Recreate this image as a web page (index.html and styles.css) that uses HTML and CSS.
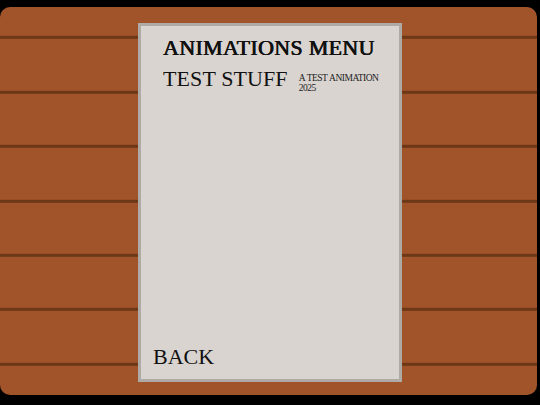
FILE: index.html
```html
<!DOCTYPE html>
<html lang="en">
<head>
<meta charset="utf-8">
<title>Animations Menu</title>
<link rel="stylesheet" href="styles.css">
</head>
<body>
  <main class="table">
    <section class="menu-card">
      <h1 class="menu-title">ANIMATIONS MENU</h1>
      <div class="anim-row">
        <span class="anim-name">TEST STUFF</span>
        <span class="anim-meta">A TEST ANIMATION<br>2025</span>
      </div>
      <button class="back-btn" type="button">BACK</button>
    </section>
  </main>
</body>
</html>
```

FILE: styles.css
```css
html, body {
  margin: 0;
  padding: 0;
  background: #000;
}

body {
  width: 540px;
  height: 405px;
  overflow: hidden;
  padding-top: 7px;
  box-sizing: border-box;
}

/* wooden plank backdrop */
.table {
  width: 537px;
  height: 388px;
  border-radius: 10px;
  background-color: #a1532a;
  background-image: repeating-linear-gradient(
    to bottom,
    transparent 0,
    transparent 51.4px,
    #6c3818 51.4px,
    #6c3818 54.4px
  );
  background-position: 0 -22.2px;
  box-sizing: border-box;
  padding: 16px 0 0 138px;
}

.menu-card {
  width: 264px;
  height: 359px;
  box-sizing: border-box;
  background: #d9d4d0;
  border: 3px solid #aeaaa6;
  display: flex;
  flex-direction: column;
  padding: 11px 12px 11px 22px;
  font-family: "Liberation Serif", "Times New Roman", serif;
  color: #111;
}

.menu-title {
  margin: 0;
  font-size: 22px;
  font-weight: normal;
  line-height: 1;
  letter-spacing: 0.3px;
  text-shadow: 0.45px 0 0 #111, -0.2px 0 0 #111;
}

.anim-row {
  display: flex;
  align-items: flex-start;
  gap: 11px;
  margin-top: 9px;
}

.anim-name {
  font-size: 22px;
  line-height: 1;
  letter-spacing: 0.1px;
}

.anim-meta {
  margin-top: 6px;
  font-size: 9.5px;
  line-height: 9.5px;
  letter-spacing: -0.5px;
  word-spacing: 0.5px;
  color: #222;
}

.back-btn {
  margin-top: auto;
  margin-left: -10px;
  align-self: flex-start;
  background: none;
  border: 0;
  padding: 0;
  font-family: inherit;
  font-size: 22px;
  line-height: 1;
  color: #111;
  cursor: pointer;
}
```
